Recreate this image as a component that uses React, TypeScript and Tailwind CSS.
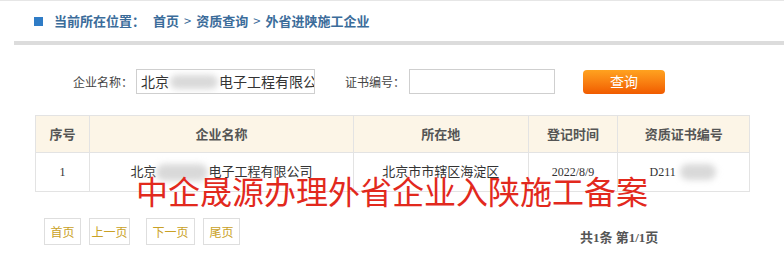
const cjk = '"Noto Sans CJK SC", sans-serif';

const cols = [
  { label: '序号', w: 'w-[53px]' },
  { label: '企业名称', w: 'w-[265px]' },
  { label: '所在地', w: 'w-[175px]' },
  { label: '登记时间', w: 'w-[90px]' },
  { label: '资质证书编号', w: 'w-[132px]' },
];

function Blur({ className }: { className: string }) {
  return <span className={`inline-block shrink-0 rounded-full bg-[#d9d9d9] blur-[3px] ${className}`} />;
}

export default function App() {
  return (
    <div
      className="relative w-[784px] h-[259px] overflow-hidden bg-white border-t border-[#e6e6e6]"
      style={{ fontFamily: cjk }}
    >
      {/* breadcrumb */}
      <div className="flex items-center h-[40px] pl-[34px] text-[13px] font-bold text-[#3b6c9a] whitespace-nowrap">
        <span className="w-[9px] h-[9px] bg-[#2f7cc6] mr-[11px]" />
        <span>当前所在位置：</span>
        <span className="ml-[8px]">首页</span>
        <span className="mx-[5px] font-normal">&gt;</span>
        <span>资质查询</span>
        <span className="mx-[5px] font-normal">&gt;</span>
        <span>外省进陕施工企业</span>
      </div>
      <div className="ml-[14px] h-[4px] bg-[#dcdcdc]" />

      {/* search */}
      <div className="flex items-center mt-[24px] h-[25px] text-[12px] text-[#444] whitespace-nowrap">
        <span className="ml-[73px] w-[63px] shrink-0">企业名称：</span>
        <div className="w-[179px] h-[25px] shrink-0 border border-[#cfcfcf] flex items-center pl-[4px] text-[14px] text-[#333] overflow-hidden">
          北京
          <Blur className="w-[48px] h-[14px] mx-[1px]" />
          电子工程有限公
        </div>
        <span className="ml-[30px] w-[64px] shrink-0">证书编号：</span>
        <div className="w-[146px] h-[25px] shrink-0 border border-[#cfcfcf]" />
        <button className="ml-[28px] w-[82px] h-[24px] shrink-0 rounded-[4px] bg-gradient-to-b from-[#ffa21f] to-[#f05a00] text-white text-[14px]">
          查询
        </button>
      </div>

      {/* table */}
      <div className="ml-[35px] mt-[21px] w-[715px] border border-[#e3e3e3]">
        <div className="flex h-[37px] bg-[#fcf5e7] text-[13px] font-bold text-[#555] border-b border-[#e3e3e3]">
          {cols.map((c, i) => (
            <div key={c.label} className={`${c.w} flex items-center justify-center ${i > 0 ? 'border-l border-[#e3e3e3]' : ''}`}>
              {c.label}
            </div>
          ))}
        </div>
        <div
          className="flex h-[38px] text-[12px] text-[#333] whitespace-nowrap"
          style={{ fontFamily: '"Liberation Serif", "Noto Sans CJK SC", serif' }}
        >
          <div className="w-[53px] flex items-center justify-center">1</div>
          <div className="w-[265px] flex items-center justify-center border-l border-[#e3e3e3] text-[13px]">
            北京
            <Blur className="w-[52px] h-[17px]" />
            电子工程有限公司
          </div>
          <div className="w-[175px] flex items-center justify-center border-l border-[#e3e3e3] text-[13px]">北京市市辖区海淀区</div>
          <div className="w-[90px] flex items-center justify-center border-l border-[#e3e3e3]">2022/8/9</div>
          <div className="w-[132px] flex items-center justify-center border-l border-[#e3e3e3] pl-[4px]">
            D211
            <Blur className="w-[36px] h-[16px] ml-[4px] mr-[6px]" />
          </div>
        </div>
      </div>

      {/* pager */}
      <div className="flex items-center mt-[24px] pl-[44px] text-[12px] text-[#c9a126] whitespace-nowrap">
        <span className="w-[37px] h-[27px] shrink-0 border border-[#dedede] flex items-center justify-center">首页</span>
        <span className="ml-[8px] w-[41px] h-[27px] shrink-0 border border-[#dedede] flex items-center justify-center">上一页</span>
        <span className="ml-[16px] w-[49px] h-[27px] shrink-0 border border-[#dedede] flex items-center justify-center">下一页</span>
        <span className="ml-[8px] w-[37px] h-[27px] shrink-0 border border-[#dedede] flex items-center justify-center">尾页</span>
        <span
          className="ml-[340px] mt-[12px] text-[13px] font-bold text-[#555]"
          style={{ fontFamily: '"Liberation Serif", "Noto Sans CJK SC", serif' }}
        >
          共1条 第1/1页
        </span>
      </div>

      {/* caption overlay */}
      <div className="absolute left-[136px] top-[173px] text-[32px] leading-none text-[#e2291d] whitespace-nowrap">
        中企晟源办理外省企业入陕施工备案
      </div>
    </div>
  );
}
